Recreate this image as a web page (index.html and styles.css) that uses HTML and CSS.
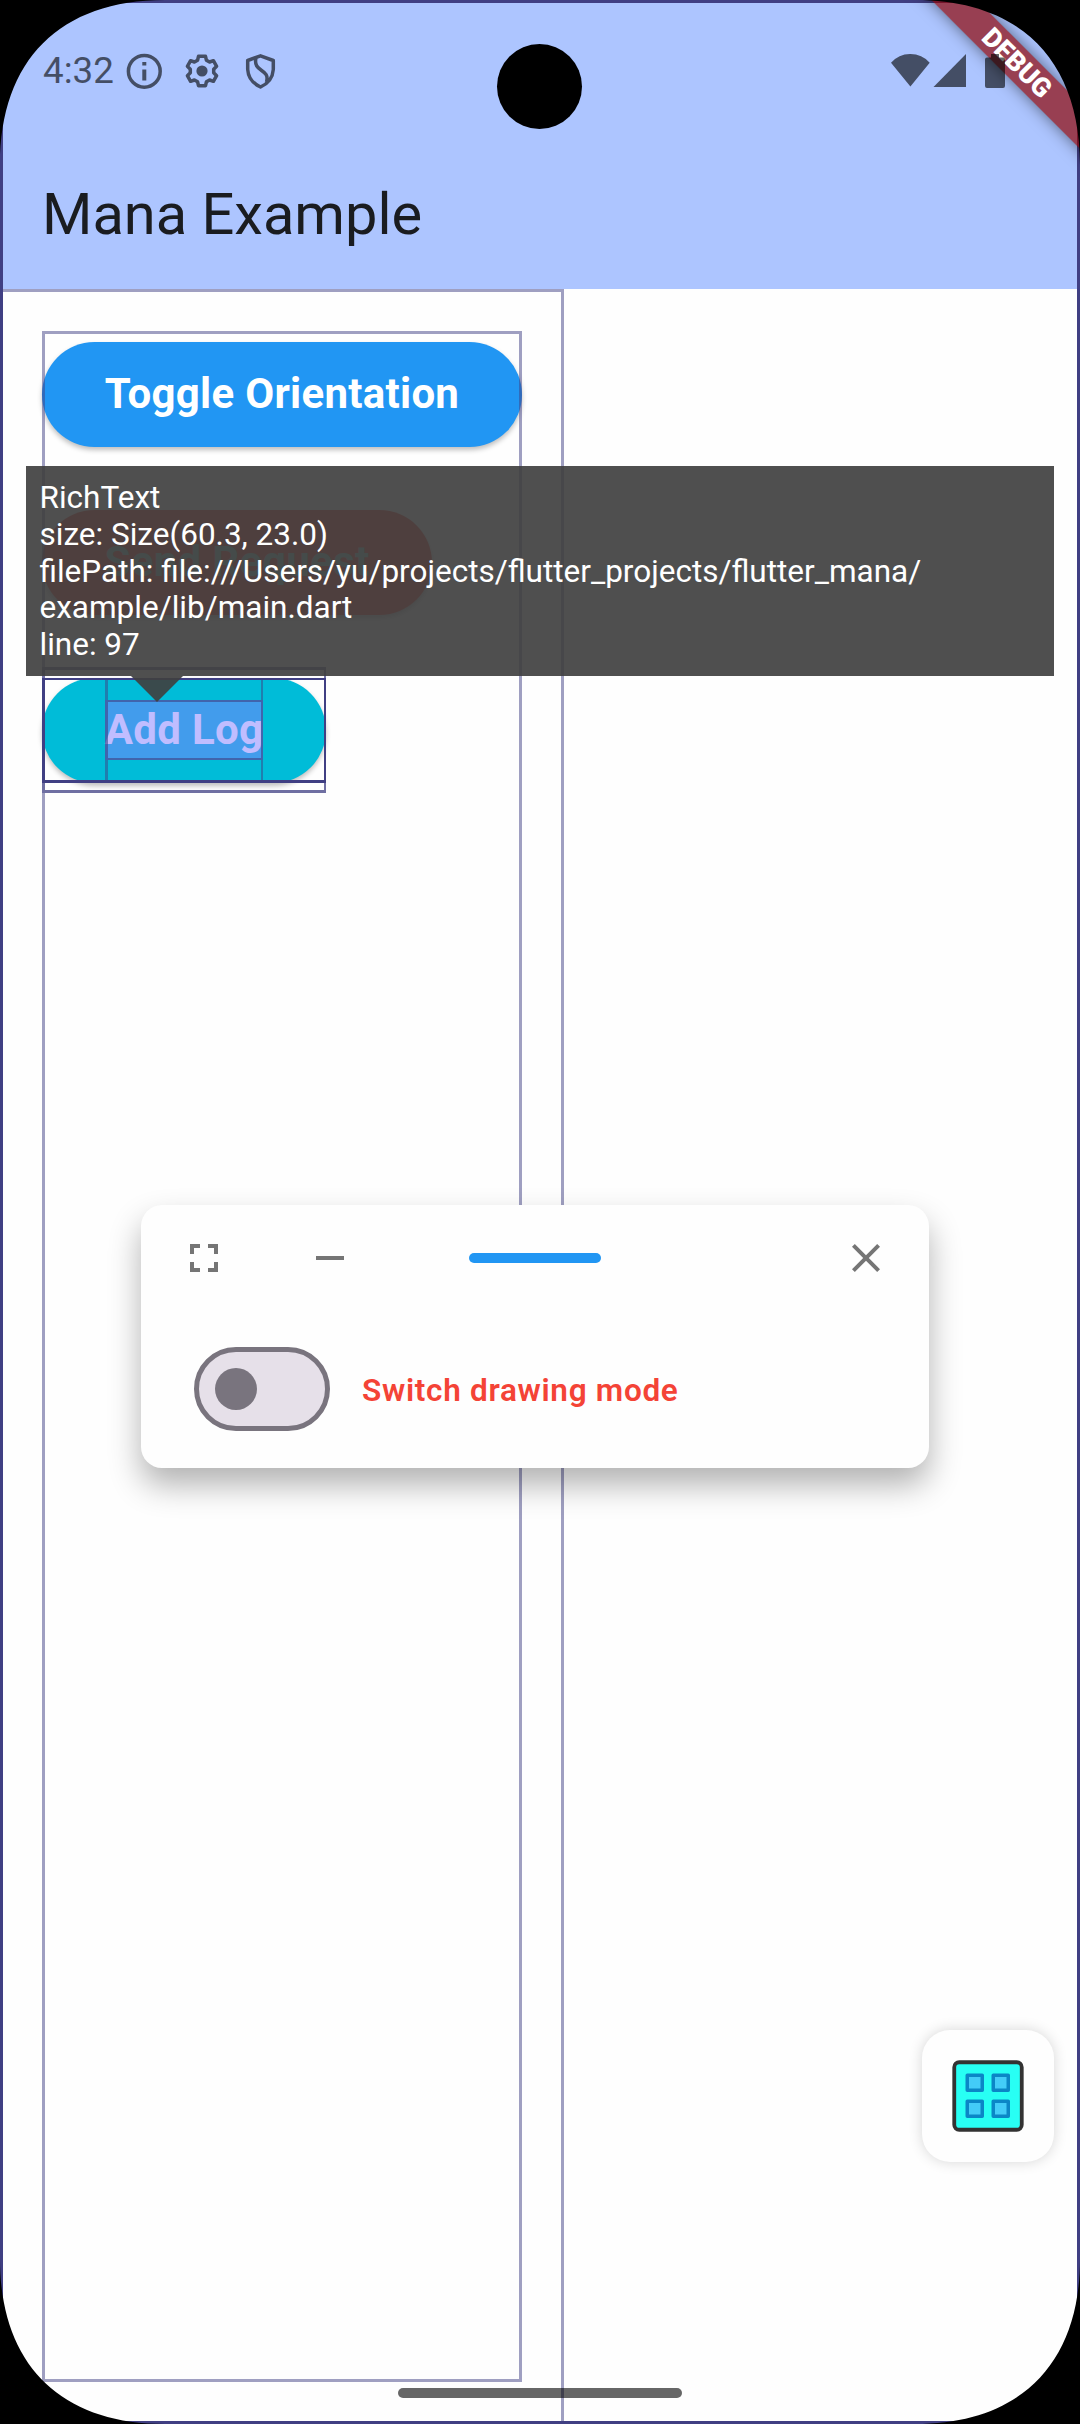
FILE: index.html
```html
<!DOCTYPE html>
<html lang="en">
<head>
<meta charset="utf-8">
<title>Mana Example</title>
<link rel="stylesheet" href="styles.css">
</head>
<body>
<div class="screen">
  <header class="app-bar">
    <h1 class="app-title">Mana Example</h1>
  </header>
  <main class="body-area">
    <div class="column">
      <button class="btn btn-blue">Toggle Orientation</button>
      <button class="btn btn-red">Send Request</button>
      <button class="btn btn-cyan">Add Log</button>
    </div>
  </main>

  <svg class="inspector" width="1080" height="2424" viewBox="0 0 1080 2424">
    <g fill="none" stroke="#403f83" stroke-width="3" stroke-opacity=".5">
      <path d="M0 290.500H562.500V2424"/>
      <rect x="43.500" y="332.500" width="477" height="2048"/>
    </g>
    <rect x="105" y="700" width="158" height="60" fill="#827dff" fill-opacity=".505"/>
    <g fill="#403f83">
      <path fill-opacity=".5" d="M42 667h284v126H42zM45 670V790H324V670z" fill-rule="evenodd"/>
      <path fill-opacity=".5" d="M45 667h281v3H45zM324 670h2v123h-2zM45 790h279v3H45z"/>
      <path d="M42 678h284v105H42zM45 680V780H324V680z" fill-rule="evenodd"/>
      <path fill-opacity=".5" d="M105 680h3v20h-3zM105 760h3v20h-3zM261 680h2v20h-2zM261 760h2v20h-2z"/>
      <path fill-opacity=".6" d="M105 700h158v60H105zM108 702V758H261V702z" fill-rule="evenodd"/>
    </g>
    <rect x="1.500" y="1.500" width="1077" height="2421" fill="none" stroke="#403f83" stroke-width="3"/>
  </svg>

  <section class="tooltip">
    <p>RichText</p>
    <p>size: Size(60.3, 23.0)</p>
    <p>filePath: file:///Users/yu/projects/flutter_projects/flutter_mana/<wbr>example/lib/main.dart</p>
    <p>line: 97</p>
    <svg class="tooltip-arrow" width="52" height="26" viewBox="0 0 52 26"><path d="M0 0H52L26 26z"/></svg>
  </section>

  <section class="panel">
    <div class="panel-bar">
      <svg class="icon icon-full" width="48" height="48" viewBox="0 0 24 24"><path d="M7 14H5v5h5v-2H7v-3zm-2-4h2V7h3V5H5v5zm12 7h-3v2h5v-5h-2v3zM14 5v2h3v3h2V5h-5z"/></svg>
      <svg class="icon icon-min" width="48" height="48" viewBox="0 0 24 24"><path d="M5 11h14v2H5z"/></svg>
      <span class="handle"></span>
      <svg class="icon icon-close" width="48" height="48" viewBox="0 0 24 24"><path d="M19 6.410 17.590 5 12 10.590 6.410 5 5 6.410 10.590 12 5 17.590 6.410 19 12 13.410 17.590 19 19 17.590 13.410 12z"/></svg>
    </div>
    <div class="panel-row">
      <span class="switch"><span class="thumb"></span></span>
      <span class="switch-label">Switch drawing mode</span>
    </div>
  </section>

  <button class="fab" aria-label="Tools">
    <svg width="72" height="72" viewBox="0 0 72 72">
      <rect x="2.250" y="2.250" width="67.500" height="67.500" rx="5" fill="#28fff4" stroke="#333" stroke-width="3.800"/>
      <g fill="#43ccf8" stroke="#0b86c6" stroke-width="3.500" stroke-linejoin="round">
        <rect x="15.250" y="15.250" width="15" height="15"/><rect x="41.250" y="15.250" width="15" height="15"/>
        <rect x="15.250" y="41.250" width="15" height="15"/><rect x="41.250" y="41.250" width="15" height="15"/>
      </g>
    </svg>
  </button>

  <div class="debug"><span>DEBUG</span></div>

  <div class="status">
    <span class="clock">4:32</span>
    <svg class="status-left" width="136" height="40" viewBox="0 0 136 40" fill="none" stroke="#000" stroke-width="3.500">
      <circle cx="18.300" cy="20.300" r="15.900"/>
      <path d="M18.300 18.500v11M18.300 11v3.500" stroke-width="4"/>
      <g transform="translate(76 20)">
        <path stroke-linejoin="round" d="M-3.500-14.700H3.500L4.400-10.800 7.600-9 11.400-10.300 14.600-4.700 11.700-1.800V1.800L14.600 4.700 11.400 10.300 7.600 9 4.400 10.800 3.500 14.700H-3.500L-4.400 10.800-7.600 9-11.400 10.300-14.600 4.700-11.700 1.800V-1.800L-14.600-4.700-11.400-10.300-7.600-9-4.400-10.800z"/>
        <circle r="5.600" fill="#000" stroke="none"/>
      </g>
      <path stroke-linejoin="round" d="M134.500 4.800 147.300 9.500V18.500Q146.500 30.500 134.500 36 122.500 30.500 121.700 18.500V9.500zM130 6.500C126.500 22 144.500 17 140.500 31"/>
    </svg>
    <svg class="status-right" width="118" height="36" viewBox="0 0 118 36">
      <path d="M0 8.700Q8-.1 19.400 0 31 0 38.700 8.700L19.400 32.500z"/>
      <path d="M75 0V33H42.500z"/>
      <path d="M100 0h8v3.500h4.500q1.500 0 1.500 1.500V32q0 2-2 2H96q-2 0-2-2V5.500q0-2 2-2h4z"/>
    </svg>
  </div>
  <span class="nav-pill"></span>
  <span class="camera"></span>
  <svg class="corners" width="1080" height="2424" viewBox="0 0 1080 2424">
    <path d="M0 0H165C60 0 0 60 0 165zM1080 0V165C1080 60 1020 0 915 0zM0 2424V2259C0 2364 60 2424 165 2424zM1080 2424H915C1020 2424 1080 2364 1080 2259z"/>
  </svg>
</div>
</body>
</html>
```
FILE: styles.css
```css
* { box-sizing: border-box; margin: 0; padding: 0; }
body { width: 1080px; height: 2424px; overflow: hidden; font-family: Roboto, sans-serif; background: #000; }
button { border: 0; font-family: inherit; }

.screen { position: relative; display: flex; flex-direction: column; width: 1080px; height: 2424px; overflow: hidden; background: #fefefe; }
.app-bar { display: flex; align-items: flex-end; height: 289px; padding: 0 42px 40px; background: #adc5ff; }
.app-title { font-size: 57.75px; line-height: 70px; font-weight: 400; color: #1a1c20; }

.body-area { flex: 1; padding: 53px 42px; }
.column { display: flex; flex-direction: column; align-items: flex-start; gap: 63px; }
.btn { height: 105px; padding: 0 0 2px; border-radius: 53px; font-size: 42px; font-weight: 700; letter-spacing: .28px; white-space: nowrap; color: #fff; box-shadow: 0 3px 5px rgba(0, 0, 0, .25); }
.btn-blue { width: 480px; background: #2196f3; }
.btn-red { width: 390px; background: #f44336; color: #80c8c0; }
.btn-cyan { width: 284px; background: #00bcd8; }

.inspector, .corners { position: absolute; inset: 0; }

.tooltip { position: absolute; left: 26px; top: 466px; width: 1028px; height: 210px; padding: 14px 13.5px 12px; background: rgba(63, 63, 63, .918); font-size: 31.5px; line-height: 36.75px; color: #fff; }
.tooltip-arrow { position: absolute; left: 105px; top: 210px; fill: rgba(63, 63, 63, .918); }

.panel { position: absolute; left: 141px; top: 1205px; width: 788px; height: 263px; border-radius: 21px; background: #fefefe; box-shadow: 0 17px 32px rgba(0, 0, 0, .3); }
.panel-bar { display: flex; align-items: center; height: 107px; padding: 0 39px 1px; }
.icon { fill: #757575; }
.icon-min { margin-left: 78px; }
.handle { width: 132px; height: 10px; margin-left: 115px; border-radius: 5px; background: #2196f3; }
.icon-close { margin-left: auto; }
.panel-row { display: flex; align-items: center; gap: 32px; padding: 35px 53px; }
.switch { display: flex; align-items: center; width: 136px; height: 84px; padding-left: 16px; border: 5px solid #79747e; border-radius: 42px; background: #e6e0e9; }
.thumb { width: 42px; height: 42px; border-radius: 50%; background: #79747e; }
.switch-label { padding-top: 2px; font-size: 31.5px; font-weight: 600; letter-spacing: .7px; color: #f44336; }

.fab { position: absolute; left: 922px; top: 2030px; display: grid; place-items: center; width: 132px; height: 132px; border-radius: 28px; background: #fefefe; box-shadow: 0 0 14px rgba(0, 0, 0, .16); }

.debug { position: absolute; left: 867px; top: 47px; display: grid; place-items: center; width: 300px; height: 32px; transform: rotate(45deg); background: rgba(141, 0, 0, .68); box-shadow: 0 0 16px rgba(0, 0, 0, .5); font-size: 26.8px; font-weight: 900; color: #fff; }

.status { position: absolute; left: 0; top: 0; display: flex; align-items: flex-start; width: 1080px; height: 140px; padding: 51px 0 0 43px; opacity: .6; }
.clock { width: 83px; font-size: 36.75px; line-height: 40px; }
.status-left { overflow: visible; }
.status-right { margin: 3px 0 0 629px; }
.camera { position: absolute; left: 497px; top: 44px; width: 85px; height: 85px; border-radius: 50%; background: #000; }
.nav-pill { position: absolute; left: 398px; top: 2388px; width: 284px; height: 10px; border-radius: 5px; background: rgba(0, 0, 0, .6); }
```
